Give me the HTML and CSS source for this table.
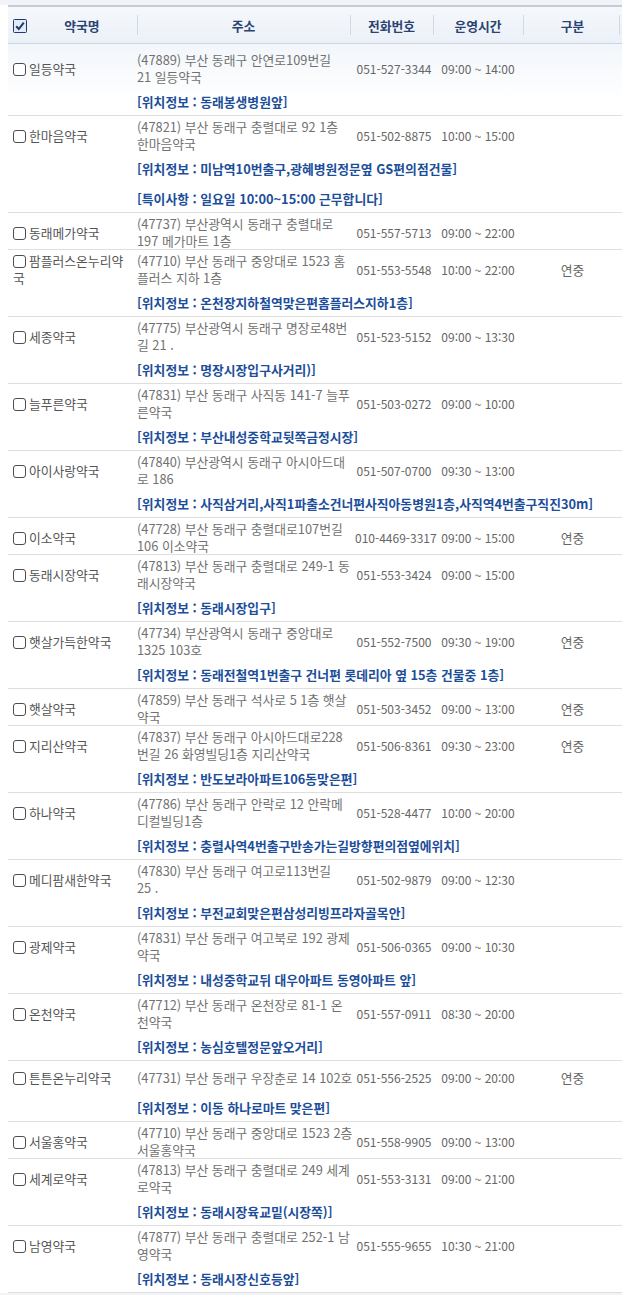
FILE: index.html
```html
<!DOCTYPE html>
<html lang="ko">
  <head>
    <meta charset="UTF-8" />
    <meta name="viewport" content="width=device-width, initial-scale=1.0" />
    <title>휴일지킴이약국 - 동래구</title>
    <link rel="stylesheet" href="styles.css">
  </head>
  <body>
    <table class="pharmacy-list">
      <colgroup>
        <col class="col-name" />
        <col class="col-addr" />
        <col class="col-tel" />
        <col class="col-time" />
        <col class="col-kind" />
      </colgroup>
      <thead>
        <tr>
          <th class="th-name">
            <svg class="check-all" width="14" height="14" viewBox="0 0 14 14" aria-hidden="true">
              <rect x="0.5" y="0.5" width="13" height="13" rx="1" fill="#e3ebf6" stroke="#1e3b6c" />
              <path d="M3.2 7.2 L5.8 10 L10.8 3.6" fill="none" stroke="#1e3b6c" stroke-width="2" />
            </svg>
            약국명
          </th>
          <th>주소</th>
          <th>전화번호</th>
          <th>운영시간</th>
          <th>구분</th>
        </tr>
      </thead>

      <tbody class="shop">
        <tr class="main">
          <td class="name"><input type="checkbox" />일등약국</td>
          <td class="addr">(47889) 부산 동래구 안연로109번길<br />21 일등약국</td>
          <td class="tel">051-527-3344</td>
          <td class="time">09:00 ~ 14:00</td>
          <td class="kind"></td>
        </tr>
        <tr class="info">
          <td></td>
          <td colspan="4"><p class="loc">[위치정보 : 동래봉생병원앞]</p></td>
        </tr>
      </tbody>

      <tbody class="shop">
        <tr class="main">
          <td class="name"><input type="checkbox" />한마음약국</td>
          <td class="addr">(47821) 부산 동래구 충렬대로 92 1층<br />한마음약국</td>
          <td class="tel">051-502-8875</td>
          <td class="time">10:00 ~ 15:00</td>
          <td class="kind"></td>
        </tr>
        <tr class="info">
          <td></td>
          <td colspan="4">
            <p class="loc">[위치정보 : 미남역10번출구,광혜병원정문옆 GS편의점건물]</p>
            <p class="loc">[특이사항 : 일요일 10:00~15:00 근무합니다]</p>
          </td>
        </tr>
      </tbody>

      <tbody class="shop">
        <tr class="main">
          <td class="name"><input type="checkbox" />동래메가약국</td>
          <td class="addr">(47737) 부산광역시 동래구 충렬대로<br />197 메가마트 1층</td>
          <td class="tel">051-557-5713</td>
          <td class="time">09:00 ~ 22:00</td>
          <td class="kind"></td>
        </tr>
      </tbody>

      <tbody class="shop">
        <tr class="main">
          <td class="name"><input type="checkbox" />팜플러스온누리약국</td>
          <td class="addr">(47710) 부산 동래구 중앙대로 1523 홈<br />플러스 지하 1층</td>
          <td class="tel">051-553-5548</td>
          <td class="time">10:00 ~ 22:00</td>
          <td class="kind">연중</td>
        </tr>
        <tr class="info">
          <td></td>
          <td colspan="4"><p class="loc">[위치정보 : 온천장지하철역맞은편홈플러스지하1층]</p></td>
        </tr>
      </tbody>

      <tbody class="shop">
        <tr class="main">
          <td class="name"><input type="checkbox" />세종약국</td>
          <td class="addr">(47775) 부산광역시 동래구 명장로48번<br />길 21 .</td>
          <td class="tel">051-523-5152</td>
          <td class="time">09:00 ~ 13:30</td>
          <td class="kind"></td>
        </tr>
        <tr class="info">
          <td></td>
          <td colspan="4"><p class="loc">[위치정보 : 명장시장입구사거리)]</p></td>
        </tr>
      </tbody>

      <tbody class="shop">
        <tr class="main">
          <td class="name"><input type="checkbox" />늘푸른약국</td>
          <td class="addr">(47831) 부산 동래구 사직동 141-7 늘푸<br />른약국</td>
          <td class="tel">051-503-0272</td>
          <td class="time">09:00 ~ 10:00</td>
          <td class="kind"></td>
        </tr>
        <tr class="info">
          <td></td>
          <td colspan="4"><p class="loc">[위치정보 : 부산내성중학교뒷쪽금정시장]</p></td>
        </tr>
      </tbody>

      <tbody class="shop">
        <tr class="main">
          <td class="name"><input type="checkbox" />아이사랑약국</td>
          <td class="addr">(47840) 부산광역시 동래구 아시아드대<br />로 186</td>
          <td class="tel">051-507-0700</td>
          <td class="time">09:30 ~ 13:00</td>
          <td class="kind"></td>
        </tr>
        <tr class="info">
          <td></td>
          <td colspan="4"><p class="loc">[위치정보 : 사직삼거리,사직1파출소건너편사직아동병원1층,사직역4번출구직진30m]</p></td>
        </tr>
      </tbody>

      <tbody class="shop">
        <tr class="main">
          <td class="name"><input type="checkbox" />이소약국</td>
          <td class="addr">(47728) 부산 동래구 충렬대로107번길<br />106 이소약국</td>
          <td class="tel">010-4469-3317</td>
          <td class="time">09:00 ~ 15:00</td>
          <td class="kind">연중</td>
        </tr>
      </tbody>

      <tbody class="shop">
        <tr class="main">
          <td class="name"><input type="checkbox" />동래시장약국</td>
          <td class="addr">(47813) 부산 동래구 충렬대로 249-1 동<br />래시장약국</td>
          <td class="tel">051-553-3424</td>
          <td class="time">09:00 ~ 15:00</td>
          <td class="kind"></td>
        </tr>
        <tr class="info">
          <td></td>
          <td colspan="4"><p class="loc">[위치정보 : 동래시장입구]</p></td>
        </tr>
      </tbody>

      <tbody class="shop">
        <tr class="main">
          <td class="name"><input type="checkbox" />햇살가득한약국</td>
          <td class="addr">(47734) 부산광역시 동래구 중앙대로<br />1325 103호</td>
          <td class="tel">051-552-7500</td>
          <td class="time">09:30 ~ 19:00</td>
          <td class="kind">연중</td>
        </tr>
        <tr class="info">
          <td></td>
          <td colspan="4"><p class="loc">[위치정보 : 동래전철역1번출구 건너편 롯데리아 옆 15층 건물중 1층]</p></td>
        </tr>
      </tbody>

      <tbody class="shop">
        <tr class="main">
          <td class="name"><input type="checkbox" />햇살약국</td>
          <td class="addr">(47859) 부산 동래구 석사로 5 1층 햇살<br />약국</td>
          <td class="tel">051-503-3452</td>
          <td class="time">09:00 ~ 13:00</td>
          <td class="kind">연중</td>
        </tr>
      </tbody>

      <tbody class="shop">
        <tr class="main">
          <td class="name"><input type="checkbox" />지리산약국</td>
          <td class="addr">(47837) 부산 동래구 아시아드대로228<br />번길 26 화영빌딩1층 지리산약국</td>
          <td class="tel">051-506-8361</td>
          <td class="time">09:30 ~ 23:00</td>
          <td class="kind">연중</td>
        </tr>
        <tr class="info">
          <td></td>
          <td colspan="4"><p class="loc">[위치정보 : 반도보라아파트106동맞은편]</p></td>
        </tr>
      </tbody>

      <tbody class="shop">
        <tr class="main">
          <td class="name"><input type="checkbox" />하나약국</td>
          <td class="addr">(47786) 부산 동래구 안락로 12 안락메<br />디컬빌딩1층</td>
          <td class="tel">051-528-4477</td>
          <td class="time">10:00 ~ 20:00</td>
          <td class="kind"></td>
        </tr>
        <tr class="info">
          <td></td>
          <td colspan="4"><p class="loc">[위치정보 : 충렬사역4번출구반송가는길방향편의점옆에위치]</p></td>
        </tr>
      </tbody>

      <tbody class="shop">
        <tr class="main">
          <td class="name"><input type="checkbox" />메디팜새한약국</td>
          <td class="addr">(47830) 부산 동래구 여고로113번길<br />25 .</td>
          <td class="tel">051-502-9879</td>
          <td class="time">09:00 ~ 12:30</td>
          <td class="kind"></td>
        </tr>
        <tr class="info">
          <td></td>
          <td colspan="4"><p class="loc">[위치정보 : 부전교회맞은편삼성리빙프라자골목안]</p></td>
        </tr>
      </tbody>

      <tbody class="shop">
        <tr class="main">
          <td class="name"><input type="checkbox" />광제약국</td>
          <td class="addr">(47831) 부산 동래구 여고북로 192 광제<br />약국</td>
          <td class="tel">051-506-0365</td>
          <td class="time">09:00 ~ 10:30</td>
          <td class="kind"></td>
        </tr>
        <tr class="info">
          <td></td>
          <td colspan="4"><p class="loc">[위치정보 : 내성중학교뒤 대우아파트 동영아파트 앞]</p></td>
        </tr>
      </tbody>

      <tbody class="shop">
        <tr class="main">
          <td class="name"><input type="checkbox" />온천약국</td>
          <td class="addr">(47712) 부산 동래구 온천장로 81-1 온<br />천약국</td>
          <td class="tel">051-557-0911</td>
          <td class="time">08:30 ~ 20:00</td>
          <td class="kind"></td>
        </tr>
        <tr class="info">
          <td></td>
          <td colspan="4"><p class="loc">[위치정보 : 농심호텔정문앞오거리]</p></td>
        </tr>
      </tbody>

      <tbody class="shop">
        <tr class="main">
          <td class="name"><input type="checkbox" />튼튼온누리약국</td>
          <td class="addr">(47731) 부산 동래구 우장춘로 14 102호</td>
          <td class="tel">051-556-2525</td>
          <td class="time">09:00 ~ 20:00</td>
          <td class="kind">연중</td>
        </tr>
        <tr class="info">
          <td></td>
          <td colspan="4"><p class="loc">[위치정보 : 이동 하나로마트 맞은편]</p></td>
        </tr>
      </tbody>

      <tbody class="shop">
        <tr class="main">
          <td class="name"><input type="checkbox" />서울홍약국</td>
          <td class="addr">(47710) 부산 동래구 중앙대로 1523 2층<br />서울홍약국</td>
          <td class="tel">051-558-9905</td>
          <td class="time">09:00 ~ 13:00</td>
          <td class="kind"></td>
        </tr>
      </tbody>

      <tbody class="shop">
        <tr class="main">
          <td class="name"><input type="checkbox" />세계로약국</td>
          <td class="addr">(47813) 부산 동래구 충렬대로 249 세계<br />로약국</td>
          <td class="tel">051-553-3131</td>
          <td class="time">09:00 ~ 21:00</td>
          <td class="kind"></td>
        </tr>
        <tr class="info">
          <td></td>
          <td colspan="4"><p class="loc">[위치정보 : 동래시장육교밑(시장쪽)]</p></td>
        </tr>
      </tbody>

      <tbody class="shop">
        <tr class="main">
          <td class="name"><input type="checkbox" />남영약국</td>
          <td class="addr">(47877) 부산 동래구 충렬대로 252-1 남<br />영약국</td>
          <td class="tel">051-555-9655</td>
          <td class="time">10:30 ~ 21:00</td>
          <td class="kind"></td>
        </tr>
        <tr class="info">
          <td></td>
          <td colspan="4"><p class="loc">[위치정보 : 동래시장신호등앞]</p></td>
        </tr>
      </tbody>
    </table>
  </body>
</html>
```

FILE: styles.css
```css
body {
  margin: 0;
  padding: 5px 0 0 8px;
  background: linear-gradient(#f1f4f9 5px, #fff 5px);
  font-family: "Noto Sans CJK KR", sans-serif;
  font-size: 0.8rem;
  line-height: 17px;
  color: #666;
}
.pharmacy-list {
  width: 614px;
  table-layout: fixed;
  border-collapse: separate;
  border-spacing: 0;
}
.col-name {
  width: 129px;
}
.col-addr {
  width: 213px;
}
.col-tel {
  width: 83px;
}
.col-time {
  width: 90px;
}
.col-kind {
  width: 99px;
}

/* header */
.pharmacy-list th {
  height: 36px;
  padding: 0;
  border-top: 2px solid #c6ccd6;
  border-bottom: 1px solid #cfd5de;
  font-weight: bold;
  color: #2b4371;
  text-align: center;
  background: linear-gradient(#d3d9e2, #d3d9e2) left center / 1px 20px no-repeat,
    linear-gradient(#f5f8fc, #ebf1f8);
}
.pharmacy-list .th-name {
  padding-left: 5px;
  background: linear-gradient(#f5f8fc, #ebf1f8);
}
.pharmacy-list th:last-child {
  background: linear-gradient(#d3d9e2, #d3d9e2) left center / 1px 20px no-repeat,
    linear-gradient(#d3d9e2, #d3d9e2) right 2px center / 1px 20px no-repeat,
    linear-gradient(#f5f8fc, #ebf1f8);
}
.check-all {
  float: left;
  margin-top: 2px;
}

/* rows */
.shop:first-of-type {
  background: linear-gradient(#f2f6fb, #fff 55px);
}
.shop td {
  padding: 0;
  vertical-align: middle;
}
.shop tr:last-child td {
  border-bottom: 1px solid #dedede;
}
.main {
  height: 30px;
}
.main td {
  padding-top: 2px;
}
.shop:first-of-type .main td {
  padding-top: 7px;
}
.info td {
  padding: 8px 0 5px;
}
.name {
  padding-left: 5px !important;
  padding-right: 4px !important;
  color: #555;
}
.name input {
  -webkit-appearance: none;
  appearance: none;
  width: 13px;
  height: 13px;
  margin: 0 3px 0 0;
  border: 1px solid #4d4d4d;
  border-radius: 3px;
  background: #fff;
  vertical-align: -2px;
}
.addr {
  white-space: nowrap;
  color: #717171;
}
.tel,
.time,
.kind {
  text-align: center;
  white-space: nowrap;
}
.tel,
.time {
  font-size: 0.75rem;
}
.main .tel {
  padding-left: 5px;
}
.loc {
  margin: 0;
  font-weight: bold;
  color: #1c4e9a;
  white-space: nowrap;
}
.loc + .loc {
  margin-top: 13px;
}
```
